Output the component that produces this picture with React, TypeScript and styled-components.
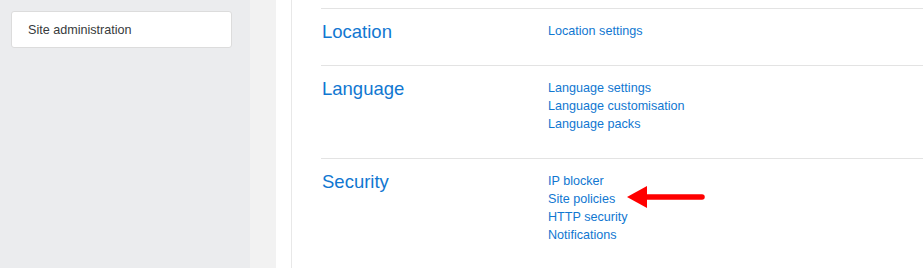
import React from "react";
import styled, { createGlobalStyle } from "styled-components";

const GlobalStyle = createGlobalStyle`
  html, body { margin: 0; padding: 0; background: #ffffff; }
  body { font-family: "Liberation Sans", Arial, sans-serif; }
`;

const Page = styled.div`
  display: flex;
  height: 268px;
  overflow: hidden;
`;

const Sidebar = styled.aside`
  width: 250px;
  flex: none;
  background: #ebecee;
  padding: 11px 18px 0 11px;
  box-sizing: border-box;
`;

const NavCard = styled.div`
  height: 37px;
  box-sizing: border-box;
  background: #ffffff;
  border: 1px solid #dcdcdc;
  border-radius: 3px;
  padding-left: 16px;
  display: flex;
  align-items: center;
  font-size: 12.6px;
  color: #373a3c;
`;

const Strip = styled.div`
  width: 26px;
  flex: none;
  background: #f2f2f2;
`;

const Gutter = styled.div`
  width: 15px;
  flex: none;
  border-right: 1px solid #e8e8e8;
`;

const Main = styled.main`
  flex: 1;
  padding: 8px 0 0 29px;
`;

const Section = styled.section`
  display: grid;
  grid-template-columns: 226px 1fr;
  align-items: start;
  border-top: 1px solid #e3e3e3;
  padding: 13px 0 25px 1px;
`;

const Heading = styled.h3`
  margin: -1px 0 -3px;
  font-size: 18.5px;
  line-height: 22px;
  font-weight: 400;
  color: #1177d1;
`;

const LinkList = styled.ul`
  list-style: none;
  margin: 0;
  padding: 0;
`;

const LinkItem = styled.li`
  position: relative;
  font-size: 12.6px;
  line-height: 18px;
`;

const Link = styled.a`
  color: #1177d1;
  text-decoration: none;
`;

const Arrow = styled.svg`
  position: absolute;
  left: 79px;
  top: -4px;
`;

const sections: { title: string; links: string[] }[] = [
  { title: "Location", links: ["Location settings"] },
  {
    title: "Language",
    links: ["Language settings", "Language customisation", "Language packs"],
  },
  {
    title: "Security",
    links: ["IP blocker", "Site policies", "HTTP security", "Notifications"],
  },
];

export default function App() {
  return (
    <>
      <GlobalStyle />
      <Page>
        <Sidebar>
          <NavCard>Site administration</NavCard>
        </Sidebar>
        <Strip />
        <Gutter />
        <Main>
          {sections.map((s) => (
            <Section key={s.title}>
              <Heading>{s.title}</Heading>
              <LinkList>
                {s.links.map((l) => (
                  <LinkItem key={l}>
                    <Link href="#">{l}</Link>
                    {l === "Site policies" && (
                      <Arrow width="80" height="24" viewBox="0 0 80 24">
                        <polygon points="0,11 20,0 20,22" fill="#ff0000" />
                        <line
                          x1="18"
                          y1="11"
                          x2="75"
                          y2="11"
                          stroke="#ff0000"
                          strokeWidth="5.5"
                          strokeLinecap="round"
                        />
                      </Arrow>
                    )}
                  </LinkItem>
                ))}
              </LinkList>
            </Section>
          ))}
        </Main>
      </Page>
    </>
  );
}
